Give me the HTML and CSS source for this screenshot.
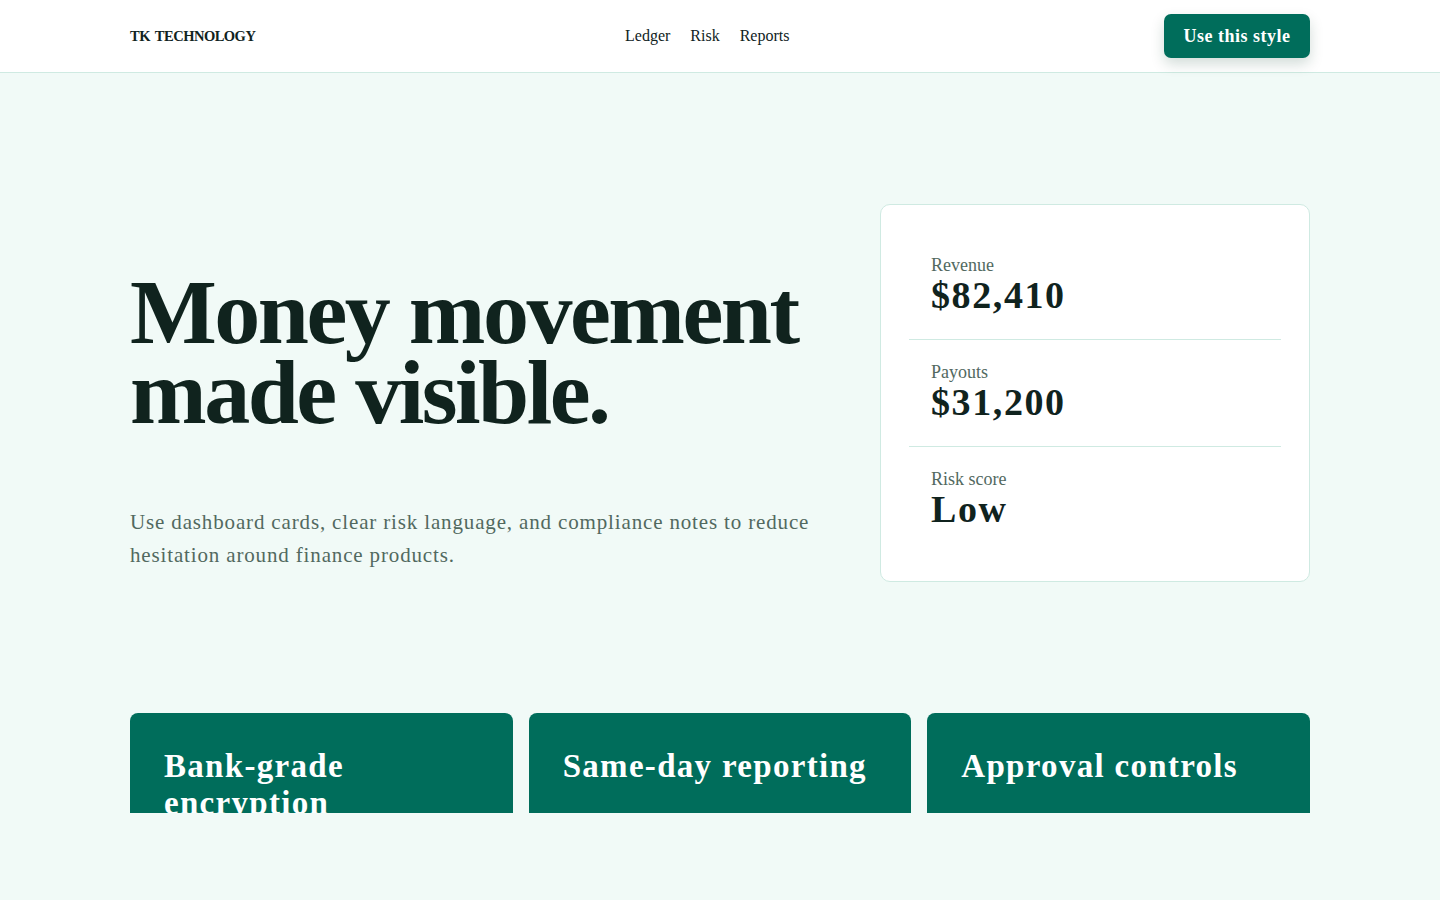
FILE: index.html
```html
<!DOCTYPE html>
<html lang="en">
<head>
    <meta charset="UTF-8">
    <meta name="viewport" content="width=device-width, initial-scale=1.0">
    <title>TK Technology</title>
    <link rel="stylesheet" href="styles.css">
</head>
<body>

    <!-- Top bar -->
    <header class="topbar">
        <div class="wrap topbar-inner">
            <a href="#" class="brand">TK TECHNOLOGY</a>
            <nav class="nav">
                <a href="#">Ledger</a>
                <a href="#">Risk</a>
                <a href="#">Reports</a>
            </nav>
            <a href="#" class="cta-btn">Use this style</a>
        </div>
    </header>

    <!-- Hero -->
    <section class="hero">
        <div class="wrap hero-grid">
            <div class="hero-copy">
                <h1>Money movement made visible.</h1>
                <p>Use dashboard cards, clear risk language, and compliance notes to reduce hesitation around finance products.</p>
            </div>
            <div class="stats-card">
                <div class="stat">
                    <span class="stat-label">Revenue</span>
                    <strong class="stat-value">$82,410</strong>
                </div>
                <div class="stat">
                    <span class="stat-label">Payouts</span>
                    <strong class="stat-value">$31,200</strong>
                </div>
                <div class="stat">
                    <span class="stat-label">Risk score</span>
                    <strong class="stat-value">Low</strong>
                </div>
            </div>
        </div>
    </section>

    <!-- Features -->
    <section class="features">
        <div class="wrap feature-grid">
            <div class="feature"><h3>Bank-grade encryption</h3></div>
            <div class="feature"><h3>Same-day reporting</h3></div>
            <div class="feature"><h3>Approval controls</h3></div>
        </div>
    </section>

</body>
</html>
```

FILE: styles.css
```css
* {
    box-sizing: border-box;
}
body {
    margin: 0;
    background-color: #f1faf7;
    color: #10231e;
    font-family: "Liberation Serif", "DejaVu Serif", serif;
}
a {
    color: inherit;
    text-decoration: none;
}
.wrap {
    width: 1180px;
    margin: 0 auto;
}

/* top bar */
.topbar {
    background-color: white;
    border-bottom: 1px solid #cfeae2;
    height: 73px;
}
.topbar-inner {
    height: 72px;
    display: flex;
    align-items: center;
}
.brand {
    flex: 0 0 495px;
    font-weight: bold;
    font-size: 14.5px;
    letter-spacing: -0.5px;
    word-spacing: 2px;
}
.nav {
    display: flex;
    gap: 20px;
    font-size: 16px;
}
.cta-btn {
    width: 146px;
    height: 44px;
    display: flex;
    align-items: center;
    justify-content: center;
    margin-left: auto;
    background-color: #006d5b;
    color: white;
    font-weight: bold;
    font-size: 18px;
    letter-spacing: 0.5px;
    border-radius: 7px;
    box-shadow: 0 6px 14px rgba(0, 60, 40, 0.18);
}

/* hero */
.hero {
    padding: 131px 0 131px;
}
.hero-grid {
    display: grid;
    grid-template-columns: 1fr 430px;
    gap: 50px;
    align-items: start;
}
.hero-copy {
    padding-top: 68px;
}
.hero-copy h1 {
    margin: 0 0 74px;
    font-size: 92px;
    line-height: 80px;
    letter-spacing: -2.5px;
    font-weight: bold;
}
.hero-copy p {
    margin: 0;
    font-size: 21px;
    line-height: 33px;
    letter-spacing: 0.85px;
    color: #52695f;
}
.stats-card {
    background-color: white;
    border: 1px solid #cfeae2;
    border-radius: 10px;
    padding: 28px;
}
.stat {
    padding: 20px 22px 26px;
    border-bottom: 1px solid #cfeae2;
    display: flex;
    flex-direction: column;
}
.stat:last-child {
    border-bottom: none;
}
.stat-label {
    font-size: 18px;
    line-height: 24px;
    color: #52695f;
}
.stat-value {
    font-size: 38px;
    line-height: 36px;
    letter-spacing: 1.6px;
}

/* features */
.feature-grid {
    display: grid;
    grid-template-columns: repeat(3, 1fr);
    gap: 16px;
}
.feature {
    height: 100px;
    overflow: hidden;
    background-color: #006d5b;
    border-radius: 8px 8px 0 0;
    padding: 35px 34px 0;
}
.feature h3 {
    margin: 0;
    color: white;
    font-size: 33px;
    line-height: 37px;
    letter-spacing: 1.3px;
    font-weight: bold;
}
```
